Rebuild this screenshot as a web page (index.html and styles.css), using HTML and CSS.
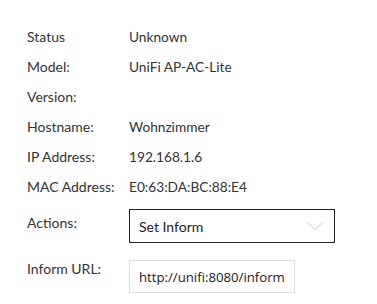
FILE: index.html
```html
<!DOCTYPE html>
<html lang="en">
<head>
  <meta charset="UTF-8" />
  <title>Device</title>
  <link rel="stylesheet" href="styles.css">
</head>
<body>
  <div class="details">
    <div class="row"><span class="label">Status</span><span class="value">Unknown</span></div>
    <div class="row"><span class="label">Model:</span><span class="value">UniFi AP-AC-Lite</span></div>
    <div class="row"><span class="label">Version:</span><span class="value"></span></div>
    <div class="row"><span class="label">Hostname:</span><span class="value">Wohnzimmer</span></div>
    <div class="row"><span class="label">IP Address:</span><span class="value">192.168.1.6</span></div>
    <div class="row"><span class="label">MAC Address:</span><span class="value">E0:63:DA:BC:88:E4</span></div>

    <div class="row field">
      <span class="label">Actions:</span>
      <div class="select">
        <span>Set Inform</span>
        <svg width="16" height="8" viewBox="0 0 16 8"><path d="M0.5 0.5 L8 7.5 L15.5 0.5" fill="none" stroke="#c8c8c8" stroke-width="1"/></svg>
      </div>
    </div>

    <div class="row field">
      <span class="label">Inform URL:</span>
      <input class="url" type="text" value="http://unifi:8080/inform">
    </div>
  </div>
</body>
</html>
```

FILE: styles.css
```css
body {
  margin: 0;
  font-family: Lato, sans-serif;
  font-size: 14px;
  color: #333;
  background: #fff;
}
.details {
  padding: 21px 0 0 27px;
}
.row {
  display: flex;
  align-items: center;
  height: 30px;
}
.label {
  width: 102px;
  flex-shrink: 0;
}
.value {
  font-size: 13.7px;
}
.field {
  height: auto;
}
.select {
  box-sizing: border-box;
  width: 206px;
  height: 34px;
  margin-top: 8px;
  border: 1px solid #222;
  display: flex;
  align-items: center;
  justify-content: space-between;
  padding: 0 11px 0 9px;
  color: #222;
}
.select svg {
  display: block;
}
.url {
  box-sizing: border-box;
  width: 166px;
  height: 33px;
  margin-top: 17px;
  border: 1px solid #ddd;
  padding: 0 0 0 9px;
  font-family: "Open Sans", sans-serif;
  font-size: 13.2px;
  color: #222;
  outline: none;
}
```
